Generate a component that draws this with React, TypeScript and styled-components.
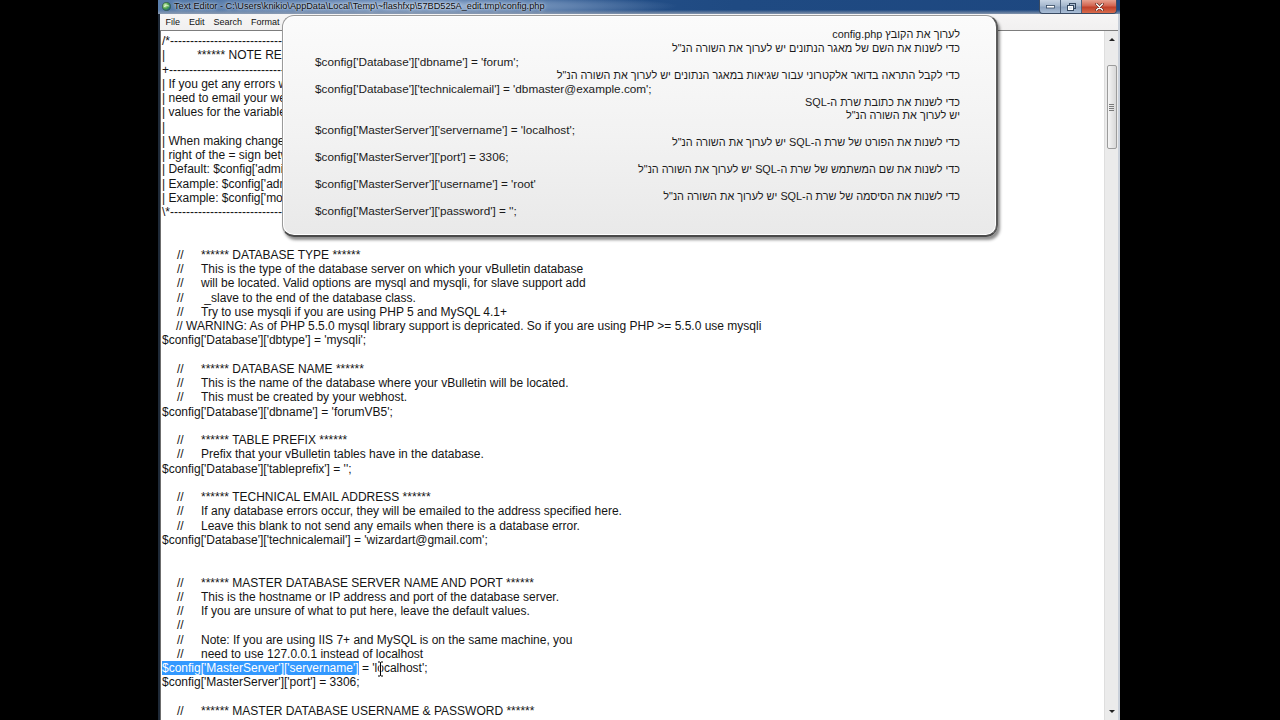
import React from 'react'
import styled, { createGlobalStyle } from 'styled-components'

const GlobalStyle = createGlobalStyle`
  html, body {
    margin: 0;
    padding: 0;
    background: #000;
  }
  body {
    width: 1280px;
    height: 720px;
    overflow: hidden;
  }
`

const Screen = styled.div`
  width: 1280px;
  height: 720px;
  background: #000;
  display: flex;
  padding-left: 158px;
  box-sizing: border-box;
`

const Window = styled.div`
  position: relative;
  width: 962px;
  height: 720px;
  display: flex;
  flex-direction: column;
  overflow: hidden;
`

const TitleBar = styled.div`
  height: 14px;
  display: flex;
  align-items: flex-start;
  padding: 0 3px 0 4px;
  background:
    linear-gradient(180deg, rgba(0,0,0,0) 70%, rgba(150,162,180,0.85) 100%),
    radial-gradient(ellipse 260px 12px at 260px 6px, rgba(170,192,220,0.95) 0%, rgba(120,150,190,0.7) 60%, rgba(31,74,130,0) 100%),
    linear-gradient(90deg, #5a7eab 0%, #2b5690 25%, #1f4a82 60%, #1d4780 100%);
`

const AppIcon = styled.svg`
  margin-top: 2px;
  flex: none;
`

const Title = styled.div`
  margin-left: 3px;
  font-family: "Liberation Sans", Arial, sans-serif;
  font-size: 9.2px;
  line-height: 13px;
  color: #0c0c0c;
  white-space: nowrap;
  text-shadow: 0 0 4px rgba(230,238,248,0.9), 0 0 2px rgba(230,238,248,0.8);
`

const Caption = styled.div`
  margin-left: auto;
  display: flex;
  height: 13px;
  border: 1px solid #3a4b63;
  border-top: none;
  border-radius: 0 0 4px 4px;
  overflow: hidden;
`

const CaptionButton = styled.div<{ $close?: boolean }>`
  width: ${p => (p.$close ? '34px' : '20px')};
  height: 13px;
  display: flex;
  align-items: center;
  justify-content: center;
  border-left: 1px solid #4c5f7a;
  background: ${p =>
    p.$close
      ? 'linear-gradient(180deg, #e6a08f 0%, #d26450 45%, #c0402a 55%, #d86b4c 100%)'
      : 'linear-gradient(180deg, #c7d4e4 0%, #a6b8ce 45%, #8ea4c0 55%, #a9bdd6 100%)'};
  &:first-child {
    border-left: none;
  }
`

const Frame = styled.div`
  flex: 1;
  display: flex;
  flex-direction: column;
  border-left: 2px solid #1e2937;
  border-right: 2px solid #c9d0da;
  min-height: 0;
`

const MenuBar = styled.div`
  height: 17px;
  display: flex;
  align-items: center;
  padding-left: 1px;
  background: linear-gradient(180deg, #f6f5f5 0%, #f1f0f0 100%);
  border-bottom: 1px solid #7d7d7d;
  box-sizing: border-box;
`

const MenuItem = styled.div`
  padding: 0 4.5px;
  font-family: "Liberation Sans", Arial, sans-serif;
  font-size: 9px;
  color: #111;
`

const Body = styled.div`
  flex: 1;
  display: flex;
  min-height: 0;
  background: #fff;
`

const Editor = styled.div`
  flex: 1;
  padding: 3px 0 0 1px;
  border-left: 1px solid #6c6c6c;
  overflow: hidden;
  font-family: "Liberation Sans", Arial, sans-serif;
  font-size: 12px;
  color: #141414;
`

const CodeLine = styled.div<{ $indent?: number }>`
  height: 14.25px;
  line-height: 14.25px;
  white-space: pre;
  padding-left: ${p => p.$indent ?? 0}px;
`

const Slashes = styled.span`
  display: inline-block;
  width: 24px;
`

const NoteGap = styled.span`
  display: inline-block;
  width: 32px;
`

const Selected = styled.span`
  background: #3399ff;
  color: #fff;
`

const ScrollBar = styled.div`
  width: 14px;
  flex: none;
  display: flex;
  flex-direction: column;
  align-items: center;
  background: #ebebeb;
  border-left: 1px solid #dedede;
  box-sizing: border-box;
`

const ArrowBox = styled.div<{ $down?: boolean }>`
  height: 17px;
  width: 100%;
  display: flex;
  align-items: center;
  justify-content: center;
  margin-top: ${p => (p.$down ? 'auto' : '0')};
`

const Arrow = styled.div<{ $down?: boolean }>`
  width: 0;
  height: 0;
  border-left: 3px solid transparent;
  border-right: 3px solid transparent;
  ${p => (p.$down ? 'border-top: 3px solid #222;' : 'border-bottom: 3px solid #222;')}
`

const Thumb = styled.div`
  margin-top: 17px;
  width: 10px;
  height: 84px;
  box-sizing: border-box;
  border: 1px solid #9c9c9c;
  border-radius: 2px;
  background: linear-gradient(90deg, #f6f6f6 0%, #e6e6e6 50%, #d8d8d8 100%);
  display: flex;
  flex-direction: column;
  align-items: center;
  justify-content: center;
  gap: 1px;
`

const Grip = styled.div`
  width: 5px;
  height: 1px;
  background: #7a7a7a;
`

const Popup = styled.div`
  position: absolute;
  left: 124px;
  top: 15px;
  width: 716px;
  height: 222px;
  box-sizing: border-box;
  padding: 12px 36px 0 32px;
  border: 1px solid #9a9a9a;
  border-right: 2px solid #5a5a5a;
  border-bottom: 2px solid #4a4a4a;
  border-radius: 12px;
  background: linear-gradient(180deg, #fbfbfb 0%, #f2f2f2 55%, #e9e9e9 100%);
  box-shadow: 2px 3px 3px rgba(0, 0, 0, 0.45), inset 0 0 0 1px #ffffff;
  font-family: "Liberation Sans", Arial, sans-serif;
  color: #1b1b1b;
`

const PopupLine = styled.div<{ $rtl?: boolean }>`
  height: 13.54px;
  line-height: 13.54px;
  white-space: pre;
  font-size: ${p => (p.$rtl ? '10.85px' : '11.75px')};
  direction: ${p => (p.$rtl ? 'rtl' : 'ltr')};
  text-align: ${p => (p.$rtl ? 'right' : 'left')};
`

const Pointer = styled.svg`
  position: absolute;
  left: 219px;
  top: 661px;
`

type Line =
  | { k: 'raw'; t: string }
  | { k: 'note' }
  | { k: 'comment'; t: string }
  | { k: 'warn'; t: string }
  | { k: 'selected'; sel: string; rest: string }

const dashes = '-'.repeat(70)

const lines: Line[] = [
  { k: 'raw', t: '/*' + dashes },
  { k: 'note' },
  { k: 'raw', t: '+' + dashes },
  { k: 'raw', t: '| If you get any errors while attempting to connect to MySQL, you will' },
  { k: 'raw', t: '| need to email your webhost because we cannot tell you the correct' },
  { k: 'raw', t: '| values for the variables in this file.' },
  { k: 'raw', t: '|' },
  { k: 'raw', t: '| When making changes to a file, edit only the values contained on the' },
  { k: 'raw', t: '| right of the = sign between the quotes' },
  { k: 'raw', t: "| Default: $config['admincpdir'] = 'admincp';" },
  { k: 'raw', t: "| Example: $config['admincpdir'] = 'myadmin';" },
  { k: 'raw', t: "| Example: $config['modcpdir'] = 'mymodcp';" },
  { k: 'raw', t: '\\*' + dashes },
  { k: 'raw', t: '' },
  { k: 'raw', t: '' },
  { k: 'comment', t: '****** DATABASE TYPE ******' },
  { k: 'comment', t: 'This is the type of the database server on which your vBulletin database' },
  { k: 'comment', t: 'will be located. Valid options are mysql and mysqli, for slave support add' },
  { k: 'comment', t: ' _slave to the end of the database class.' },
  { k: 'comment', t: 'Try to use mysqli if you are using PHP 5 and MySQL 4.1+' },
  { k: 'warn', t: '// WARNING: As of PHP 5.5.0 mysql library support is depricated. So if you are using PHP >= 5.5.0 use mysqli' },
  { k: 'raw', t: "$config['Database']['dbtype'] = 'mysqli';" },
  { k: 'raw', t: '' },
  { k: 'comment', t: '****** DATABASE NAME ******' },
  { k: 'comment', t: 'This is the name of the database where your vBulletin will be located.' },
  { k: 'comment', t: 'This must be created by your webhost.' },
  { k: 'raw', t: "$config['Database']['dbname'] = 'forumVB5';" },
  { k: 'raw', t: '' },
  { k: 'comment', t: '****** TABLE PREFIX ******' },
  { k: 'comment', t: 'Prefix that your vBulletin tables have in the database.' },
  { k: 'raw', t: "$config['Database']['tableprefix'] = '';" },
  { k: 'raw', t: '' },
  { k: 'comment', t: '****** TECHNICAL EMAIL ADDRESS ******' },
  { k: 'comment', t: 'If any database errors occur, they will be emailed to the address specified here.' },
  { k: 'comment', t: 'Leave this blank to not send any emails when there is a database error.' },
  { k: 'raw', t: "$config['Database']['technicalemail'] = 'wizardart@gmail.com';" },
  { k: 'raw', t: '' },
  { k: 'raw', t: '' },
  { k: 'comment', t: '****** MASTER DATABASE SERVER NAME AND PORT ******' },
  { k: 'comment', t: 'This is the hostname or IP address and port of the database server.' },
  { k: 'comment', t: 'If you are unsure of what to put here, leave the default values.' },
  { k: 'comment', t: '' },
  { k: 'comment', t: 'Note: If you are using IIS 7+ and MySQL is on the same machine, you' },
  { k: 'comment', t: 'need to use 127.0.0.1 instead of localhost' },
  { k: 'selected', sel: "$config['MasterServer']['servername']", rest: " = 'localhost';" },
  { k: 'raw', t: "$config['MasterServer']['port'] = 3306;" },
  { k: 'raw', t: '' },
  { k: 'comment', t: '****** MASTER DATABASE USERNAME & PASSWORD ******' },
]

const popupLines: { rtl?: boolean; t: string }[] = [
  { rtl: true, t: 'לערוך את הקובץ config.php' },
  { rtl: true, t: 'כדי לשנות את השם של מאגר הנתונים יש לערוך את השורה הנ"ל' },
  { t: "$config['Database']['dbname'] = 'forum';" },
  { rtl: true, t: 'כדי לקבל התראה בדואר אלקטרוני עבור שגיאות במאגר הנתונים יש לערוך את השורה הנ"ל' },
  { t: "$config['Database']['technicalemail'] = 'dbmaster@example.com';" },
  { rtl: true, t: 'כדי לשנות את כתובת שרת ה-SQL' },
  { rtl: true, t: 'יש לערוך את השורה הנ"ל' },
  { t: "$config['MasterServer']['servername'] = 'localhost';" },
  { rtl: true, t: 'כדי לשנות את הפורט של שרת ה-SQL יש לערוך את השורה הנ"ל' },
  { t: "$config['MasterServer']['port'] = 3306;" },
  { rtl: true, t: 'כדי לשנות את שם המשתמש של שרת ה-SQL יש לערוך את השורה הנ"ל' },
  { t: "$config['MasterServer']['username'] = 'root'" },
  { rtl: true, t: 'כדי לשנות את הסיסמה של שרת ה-SQL יש לערוך את השורה הנ"ל' },
  { t: "$config['MasterServer']['password'] = '';" },
]

const renderLine = (line: Line, i: number) => {
  switch (line.k) {
    case 'note':
      return (
        <CodeLine key={i}>
          |<NoteGap />****** NOTE REGARDING THE VARIABLES IN THIS FILE ******
        </CodeLine>
      )
    case 'comment':
      return (
        <CodeLine key={i} $indent={15}>
          <Slashes>//</Slashes>
          {line.t}
        </CodeLine>
      )
    case 'warn':
      return (
        <CodeLine key={i} $indent={14}>
          {line.t}
        </CodeLine>
      )
    case 'selected':
      return (
        <CodeLine key={i}>
          <Selected>{line.sel}</Selected>
          {line.rest}
        </CodeLine>
      )
    default:
      return <CodeLine key={i}>{line.t}</CodeLine>
  }
}

export default function App() {
  return (
    <Screen>
      <GlobalStyle />
      <Window>
        <TitleBar>
          <AppIcon width="9" height="9" viewBox="0 0 10 10">
            <defs>
              <radialGradient id="ico" cx="35%" cy="35%" r="70%">
                <stop offset="0%" stopColor="#d9f5c0" />
                <stop offset="55%" stopColor="#4fa64a" />
                <stop offset="100%" stopColor="#1f5d8a" />
              </radialGradient>
            </defs>
            <circle cx="5" cy="5" r="4.5" fill="url(#ico)" stroke="#2b4a2c" strokeWidth="0.6" />
            <path d="M2 5.5 Q5 2.5 8 4.5" stroke="#eef8e0" strokeWidth="0.8" fill="none" />
          </AppIcon>
          <Title>Text Editor - C:\Users\knikio\AppData\Local\Temp\~flashfxp\57BD525A_edit.tmp\config.php</Title>
          <Caption>
            <CaptionButton>
              <svg width="9" height="4" viewBox="0 0 9 4">
                <rect x="0.5" y="0.5" width="8" height="2.5" fill="#fff" stroke="#34475f" strokeWidth="0.8" />
              </svg>
            </CaptionButton>
            <CaptionButton>
              <svg width="9" height="8" viewBox="0 0 9 8">
                <rect x="2.5" y="0.5" width="6" height="5" fill="none" stroke="#34475f" strokeWidth="1" />
                <rect x="0.5" y="2.5" width="6" height="5" fill="#dfe7f1" stroke="#34475f" strokeWidth="1" />
                <rect x="1.5" y="3.5" width="4" height="3" fill="none" stroke="#fff" strokeWidth="1" />
              </svg>
            </CaptionButton>
            <CaptionButton $close>
              <svg width="9" height="8" viewBox="0 0 9 8">
                <path d="M1.5 1 L7.5 7 M7.5 1 L1.5 7" stroke="#5a1d12" strokeWidth="2.6" strokeLinecap="round" />
                <path d="M1.5 1 L7.5 7 M7.5 1 L1.5 7" stroke="#fff" strokeWidth="1.5" strokeLinecap="round" />
              </svg>
            </CaptionButton>
          </Caption>
        </TitleBar>
        <Frame>
          <MenuBar>
            <MenuItem>File</MenuItem>
            <MenuItem>Edit</MenuItem>
            <MenuItem>Search</MenuItem>
            <MenuItem>Format</MenuItem>
            <MenuItem>View</MenuItem>
            <MenuItem>Help</MenuItem>
          </MenuBar>
          <Body>
            <Editor>{lines.map(renderLine)}</Editor>
            <ScrollBar>
              <ArrowBox>
                <Arrow />
              </ArrowBox>
              <Thumb>
                <Grip />
                <Grip />
                <Grip />
                <Grip />
              </Thumb>
              <ArrowBox $down>
                <Arrow $down />
              </ArrowBox>
            </ScrollBar>
          </Body>
        </Frame>
        <Popup>
          {popupLines.map((l, i) => (
            <PopupLine key={i} $rtl={l.rtl} dir={l.rtl ? 'rtl' : 'ltr'}>
              {l.t}
            </PopupLine>
          ))}
        </Popup>
        <Pointer width="7" height="16" viewBox="0 0 7 16">
          <path d="M1 1 H3 L3.5 1.5 L4 1 H6 M3.5 1.5 V14.5 M1 15 H3 L3.5 14.5 L4 15 H6 M2 8 H5" stroke="#fff" strokeWidth="2.2" fill="none" />
          <path d="M1 1 H3 L3.5 1.5 L4 1 H6 M3.5 1.5 V14.5 M1 15 H3 L3.5 14.5 L4 15 H6" stroke="#000" strokeWidth="1" fill="none" />
        </Pointer>
      </Window>
    </Screen>
  )
}
